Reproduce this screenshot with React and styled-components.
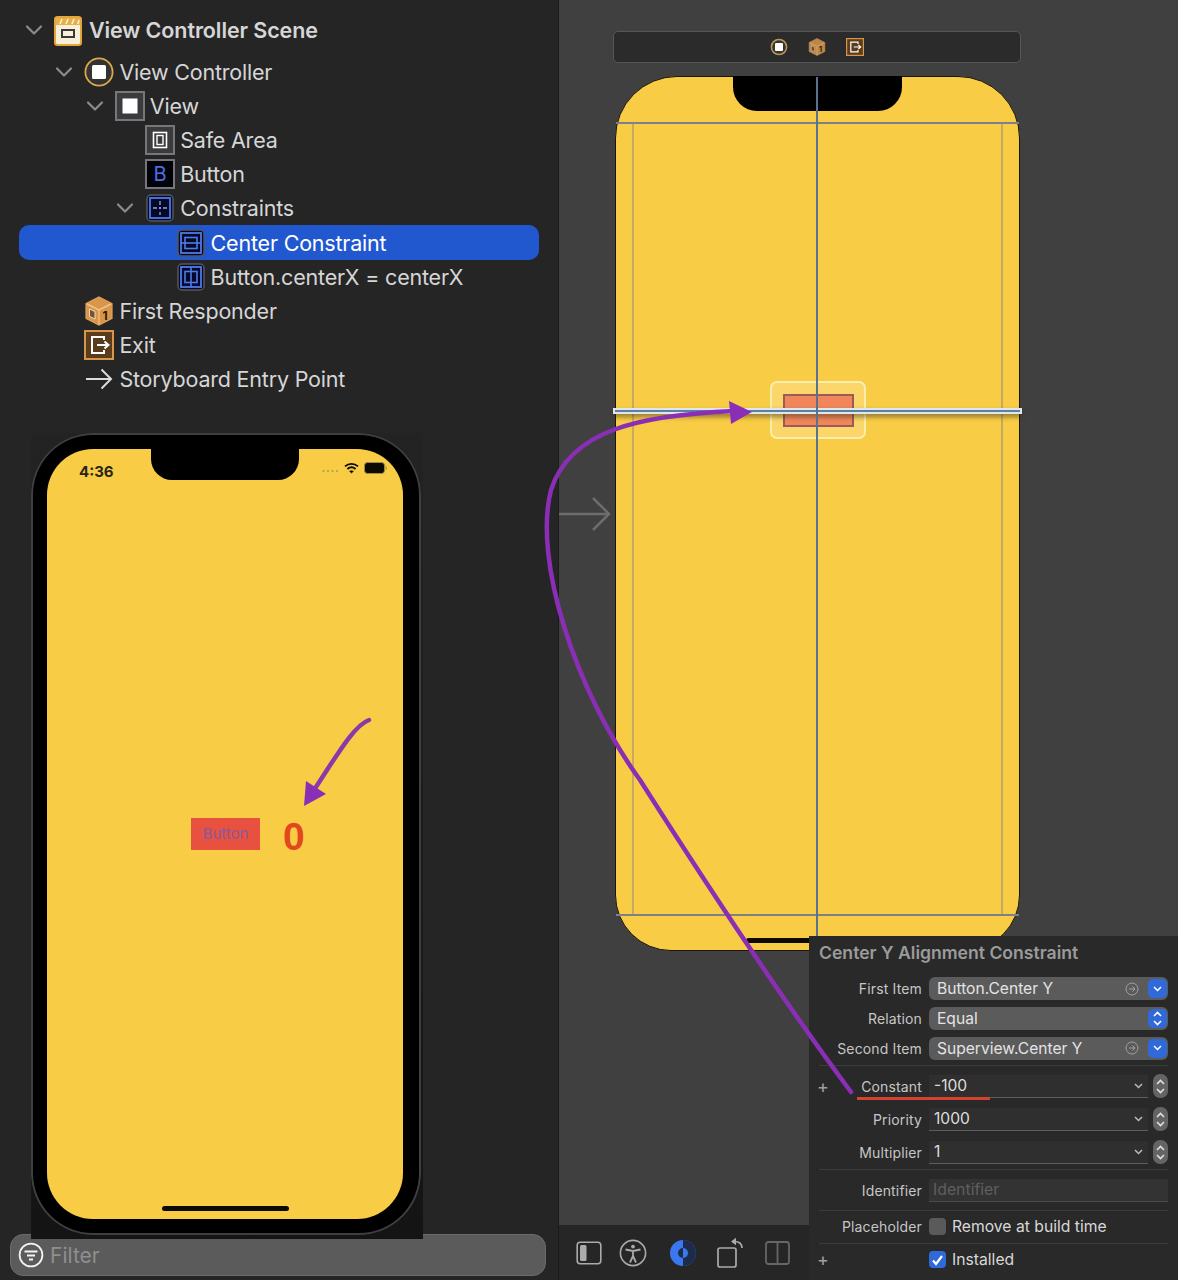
import React from "react";
import styled, { createGlobalStyle } from "styled-components";

const Global = createGlobalStyle`
  html, body { margin: 0; padding: 0; background: #252526; }
  body { width: 1178px; height: 1280px; overflow: hidden; font-family: Inter, "Liberation Sans", sans-serif; }
  * { box-sizing: border-box; }
`;

const Page = styled.div`
  position: relative;
  display: grid;
  grid-template-columns: 559px 619px;
  width: 1178px;
  height: 1280px;
  overflow: hidden;
`;

/* ---------- Sidebar ---------- */
const Sidebar = styled.aside`
  display: flex;
  flex-direction: column;
  background: #252526;
  padding-top: 13px;
  border-right: 1px solid #1c1c1c;
`;
const Tree = styled.div`
  display: flex;
  flex-direction: column;
  height: 384px;
`;
const Row = styled.div`
  display: flex;
  align-items: center;
  flex: none;
  width: 520px;
  height: ${p => (p.$scene ? 42 : 34.1)}px;
  margin-left: 19px;
  padding-left: ${p => p.$depth * 30.4}px;
  padding-bottom: ${p => (p.$scene ? 8 : 0)}px;
  border-radius: 10px;
  background: ${p => (p.$selected ? "#2157cf" : "transparent")};
`;
const ChevronSlot = styled.span`
  display: flex;
  align-items: center;
  justify-content: center;
  width: 30px;
  margin-right: 5px;
  flex: none;
`;
const IconSlot = styled.span`
  display: flex;
  align-items: center;
  justify-content: center;
  width: 30px;
  height: 30px;
  margin-right: 5px;
  flex: none;
`;
const RowLabel = styled.span`
  font-size: 21.5px;
  letter-spacing: ${p => (p.$scene ? -0.1 : -0.2)}px;
  white-space: nowrap;
  font-weight: ${p => (p.$scene ? 600 : 400)};
  color: ${p => (p.$selected ? "#fff" : "#d6d6d6")};
`;

const Simulator = styled.div`
  position: relative;
  z-index: 1;
  width: 392px;
  height: 806px;
  margin: 36px 0 0 31px;
  padding: 0 2px 4px 0;
  background: linear-gradient(#232324, #141414);
  flex: none;
`;
const PhoneBody = styled.div`
  width: 390px;
  height: 802px;
  padding: 16px 18px 16px 16px;
  background: #000;
  border-radius: 62px;
  box-shadow: inset 0 0 0 2px #3f3f41;
`;
const PhoneScreen = styled.div`
  display: flex;
  flex-direction: column;
  width: 356px;
  height: 770px;
  background: #f9cc46;
  border-radius: 46px;
  overflow: hidden;
`;
const StatusBar = styled.div`
  display: grid;
  grid-template-columns: 104px 148px 104px;
  height: 31px;
  flex: none;
`;
const Time = styled.span`
  font-size: 15px;
  font-weight: 700;
  color: #2a2515;
  padding: 14px 0 0 32px;
  line-height: 17px;
`;
const PhoneNotch = styled.div`
  background: #000;
  border-radius: 0 0 21px 21px;
`;
const StatusIcons = styled.div`
  display: flex;
  align-items: flex-start;
  gap: 5px;
  padding: 13px 0 0 23px;
`;
const AppRow = styled.div`
  display: flex;
  align-items: flex-start;
  margin: 338px 0 0 144px;
  gap: 23px;
`;
const AppButton = styled.div`
  width: 69px;
  height: 32px;
  background: #e8503f;
  color: #8b5a9c;
  font-size: 15px;
  line-height: 31px;
  text-align: center;
`;
const Counter = styled.div`
  font-family: "Liberation Sans", Arial, sans-serif;
  font-weight: 700;
  font-size: 39px;
  line-height: 38px;
  color: #e2471e;
`;
const PhoneHome = styled.div`
  width: 127px;
  height: 5px;
  border-radius: 3px;
  background: #0c0a05;
  margin: auto 0 8px 115px;
`;

const FilterBar = styled.div`
  display: flex;
  align-items: center;
  gap: 6px;
  width: 536px;
  height: 42px;
  margin: -5px 0 0 10px;
  padding: 0 0 0 7px;
  background: #5b5b5b;
  border: 1px solid #6b6b6b;
  border-radius: 13px;
  flex: none;
`;
const FilterText = styled.span`
  font-size: 21px;
  color: #8f8f8f;
`;

/* ---------- Canvas ---------- */
const Editor = styled.main`
  position: relative;
  display: flex;
  flex-direction: column;
`;
const Canvas = styled.div`
  flex: 1;
  background: #404040;
  padding: 31px 0 0 54px;
`;
const SceneDock = styled.div`
  display: flex;
  align-items: center;
  justify-content: center;
  gap: 20px;
  width: 408px;
  height: 32px;
  background: #2b2b2b;
  border: 1px solid #565656;
  border-radius: 5px;
`;
const Device = styled.div`
  position: relative;
  width: 405px;
  height: 875px;
  margin: 13px 0 0 2px;
  background: #f9cc46;
  border: 1.5px solid #1a1508;
  border-radius: 62px 62px 56px 56px;
`;
const DeviceNotch = styled.div`
  position: absolute;
  top: -1px;
  left: 117px;
  width: 169px;
  height: 35px;
  background: #000;
  border-radius: 0 0 24px 24px;
`;
const GuideH = styled.div`
  position: absolute;
  left: 0;
  right: 0;
  top: ${p => p.$top}px;
  height: 2px;
  background: #7e8087;
`;
const GuideV = styled.div`
  position: absolute;
  top: 45px;
  bottom: 36px;
  left: ${p => p.$left}px;
  width: 2px;
  background: rgba(130, 130, 130, 0.45);
`;
const CenterLine = styled.div`
  position: absolute;
  top: 0;
  bottom: 0;
  left: 200px;
  width: 2px;
  background: #5a7190;
  z-index: 3;
`;
const DeviceHome = styled.div`
  position: absolute;
  bottom: 7px;
  left: 130px;
  width: 143px;
  height: 5px;
  border-radius: 3px;
  background: #0c0a05;
`;
const SelectionBox = styled.div`
  position: absolute;
  left: 154px;
  top: 304px;
  width: 96px;
  height: 58px;
  display: flex;
  align-items: center;
  justify-content: center;
  background: rgba(255, 255, 255, 0.2);
  border: 2px solid #fdeead;
  border-radius: 7px;
`;
const SelectedButton = styled.div`
  width: 71px;
  height: 33px;
  background: #f0865a;
  border: 2px solid #9a5c5a;
`;
const ConstraintLine = styled.div`
  position: absolute;
  left: -3px;
  width: 409px;
  top: 331px;
  height: 6px;
  background: #5f7f9f;
  border: 2px solid #dfe7ee;
  box-shadow: 0 3px 5px rgba(60, 50, 20, 0.55);
  z-index: 2;
`;
const EntryArrow = styled.svg`
  position: absolute;
  left: -58px;
  top: 419px;
`;

const BottomBar = styled.div`
  display: flex;
  align-items: center;
  height: 55px;
  flex: none;
  background: #262627;
  padding-left: 8px;
`;
const ToolSlot = styled.span`
  display: flex;
  align-items: center;
  justify-content: center;
  width: ${p => p.$w}px;
  flex: none;
`;

/* ---------- Inspector ---------- */
const Inspector = styled.section`
  position: absolute;
  z-index: 4;
  left: 250px;
  top: 936px;
  width: 369px;
  height: 344px;
  padding: 0 10px;
  background: #292929;
`;
const InspectorTitle = styled.h2`
  margin: 0;
  height: 34px;
  line-height: 34px;
  font-size: 17.6px;
  font-weight: 600;
  color: #9b9b9b;
  white-space: nowrap;
`;
const Section = styled.div`
  padding-top: ${p => p.$pad || 0}px;
  padding-bottom: ${p => p.$bottom || 0}px;
  border-bottom: ${p => (p.$last ? "0" : "1px solid #3c3c3c")};
`;
const Prop = styled.div`
  display: grid;
  grid-template-columns: 103px 1fr;
  column-gap: 7px;
  align-items: center;
  height: ${p => p.$h}px;
`;
const PropLabel = styled.label`
  display: flex;
  justify-content: flex-end;
  font-size: 14px;
  letter-spacing: 0.15px;
  color: #c6c6c6;
  white-space: nowrap;
`;
const Plus = styled.span`
  margin: 0 auto 0 -2px;
  color: #a0a0a0;
  font-size: 18px;
  line-height: 17px;
`;
const Popup = styled.div`
  display: flex;
  align-items: center;
  justify-content: space-between;
  height: 23px;
  padding: 0 1px 0 8px;
  background: #5b5b5c;
  border-radius: 6px;
  font-size: 15.6px;
  color: #e3e3e3;
`;
const PopupEnd = styled.span`
  display: flex;
  align-items: center;
  gap: 9px;
`;
const BlueBox = styled.span`
  display: flex;
  align-items: center;
  justify-content: center;
  width: 19px;
  height: 19px;
  border-radius: 5px;
  background: #2f6ad8;
`;
const NumberRow = styled.div`
  display: flex;
  align-items: center;
  gap: 5px;
`;
const NumberField = styled.div`
  display: flex;
  align-items: center;
  justify-content: space-between;
  flex: 1;
  height: 23px;
  padding: 0 5px;
  background: #2f2f2f;
  border-bottom: 1px solid #5d5d5d;
  font-size: 15.6px;
  color: #dedede;
`;
const Stepper = styled.span`
  display: flex;
  align-items: center;
  justify-content: center;
  width: 15px;
  height: 24px;
  border-radius: 7px;
  background: #646464;
`;
const TextField = styled.div`
  height: 23px;
  padding: 0 4px;
  line-height: 22px;
  background: #333;
  border-bottom: 1px solid #4a4a4a;
  font-size: 15.8px;
  color: #5f5f5f;
`;
const CheckRow = styled.div`
  display: flex;
  align-items: center;
  gap: 6px;
  font-size: 15.7px;
  color: #d8d8d8;
`;
const Check = styled.span`
  display: flex;
  align-items: center;
  justify-content: center;
  width: 17px;
  height: 17px;
  border-radius: 4px;
  background: ${p => (p.$on ? "#2f6ad8" : "#5a5a5a")};
`;
const Underline = styled.div`
  position: absolute;
  z-index: 5;
  left: 857px;
  top: 1097px;
  width: 133px;
  height: 3px;
  background: #d4432f;
`;
const Annotations = styled.svg`
  position: absolute;
  z-index: 6;
  left: 0;
  top: 0;
  pointer-events: none;
`;

/* ---------- Icons ---------- */
const Chevron = () => (
  <svg width="18" height="12" viewBox="0 0 18 12" fill="none" stroke="#8b8b8b" strokeWidth="2.2" strokeLinecap="round" strokeLinejoin="round">
    <path d="M2 2.5 9 9.5 16 2.5" />
  </svg>
);
const SceneIcon = () => (
  <svg width="28" height="30" viewBox="0 0 28 30" style={{ marginLeft: -3, marginTop: 2 }}>
    <rect x="1" y="1" width="26" height="28" rx="2.5" fill="#f7efd8" stroke="#e3a53c" strokeWidth="2" />
    <rect x="2" y="2" width="24" height="7" fill="#e5b04a" />
    <path d="M6 8 8 3M12 8 14 3M18 8 20 3M24 8 25 4" stroke="#fff2c8" strokeWidth="1.6" />
    <rect x="8" y="14" width="12" height="7" fill="none" stroke="#3a3a3a" strokeWidth="2" />
  </svg>
);
const ControllerIcon = () => (
  <svg width="30" height="30" viewBox="0 0 30 30">
    <circle cx="15" cy="15" r="13.6" fill="#333" stroke="#dca94a" strokeWidth="1.8" />
    <rect x="8" y="8" width="14" height="14" rx="1.5" fill="#fff" />
  </svg>
);
const ViewIcon = () => (
  <svg width="30" height="30" viewBox="0 0 30 30">
    <rect x="1" y="1" width="28" height="28" fill="#3b3b3e" stroke="#77777b" strokeWidth="2" />
    <rect x="7.5" y="7.5" width="15" height="15" fill="#fff" />
  </svg>
);
const SafeAreaIcon = () => (
  <svg width="30" height="30" viewBox="0 0 30 30" fill="none">
    <rect x="1" y="1" width="28" height="28" fill="#3b3b3e" stroke="#77777b" strokeWidth="2" />
    <rect x="8.5" y="7.5" width="13" height="15" stroke="#fff" strokeWidth="1.6" />
    <rect x="12" y="10.5" width="6" height="9" stroke="#fff" strokeWidth="1.4" />
  </svg>
);
const ButtonIcon = () => (
  <svg width="30" height="30" viewBox="0 0 30 30">
    <rect x="1" y="1" width="28" height="28" fill="#02020a" stroke="#77777b" strokeWidth="2" />
    <text x="15" y="22" textAnchor="middle" fontFamily="Inter, sans-serif" fontSize="20" fill="#4f6fe0">B</text>
  </svg>
);
const ConstraintFrame = ({ children }) => (
  <svg width="28" height="28" viewBox="0 0 28 28" fill="none">
    <rect x="1" y="1" width="26" height="26" rx="4" fill="#06082a" stroke="#55565c" strokeWidth="1.5" />
    <rect x="4" y="4" width="20" height="20" stroke="#4d7be8" strokeWidth="1.8" />
    {children}
  </svg>
);
const ConstraintsIcon = () => (
  <ConstraintFrame>
    <path d="M14 7v4M14 13v2M14 18v3M7 14h4M13 14h2M17 14h4" stroke="#8aa7ee" strokeWidth="1.3" />
  </ConstraintFrame>
);
const CenterYIcon = () => (
  <ConstraintFrame>
    <rect x="8" y="8.5" width="12" height="11" stroke="#4d7be8" strokeWidth="1.6" />
    <path d="M4 14h20" stroke="#4d7be8" strokeWidth="1.6" />
  </ConstraintFrame>
);
const CenterXIcon = () => (
  <ConstraintFrame>
    <rect x="8" y="8.5" width="12" height="11" stroke="#4d7be8" strokeWidth="1.6" />
    <path d="M14 4v20" stroke="#4d7be8" strokeWidth="1.6" />
  </ConstraintFrame>
);
const CubeIcon = ({ size = 30, dim }) => (
  <svg width={size} height={size} viewBox="0 0 30 30" opacity={dim ? 0.85 : 1}>
    <path d="M15 1 28 7.5V22.5L15 29 2 22.5V7.5Z" fill="#d8964a" stroke="#e0a058" strokeWidth="1.2" />
    <path d="M3 8 15 14 27 8" fill="none" stroke="#f2c48a" strokeWidth="1.4" />
    <path d="M15 14V28.5" stroke="#f2c48a" strokeWidth="1.2" />
    <path d="M5.5 13 11 15.6V23L5.5 20.4Z" fill="#6f5436" stroke="#f3d9b4" strokeWidth="1" />
    <text x="21" y="24" textAnchor="middle" fontFamily="Inter, sans-serif" fontWeight="700" fontSize="12" fill="#2a1a08">1</text>
  </svg>
);
const ExitIcon = ({ size = 30 }) => (
  <svg width={size} height={size} viewBox="0 0 30 30" fill="none">
    <rect x="1" y="1" width="28" height="28" fill="#5a3d1c" stroke="#d8964a" strokeWidth="2" />
    <path d="M20 10V7H8V23H20V20" stroke="#fff" strokeWidth="2" />
    <path d="M13 15H24M20.5 11.5 24.5 15 20.5 18.5" stroke="#fff" strokeWidth="2" />
  </svg>
);
const EntryIcon = () => (
  <svg width="28" height="22" viewBox="0 0 28 22" fill="none" stroke="#dcdcdc" strokeWidth="2">
    <path d="M1 11H26M16.5 1.5 26 11 16.5 20.5" />
  </svg>
);
const FilterIcon = () => (
  <svg width="26" height="26" viewBox="0 0 26 26" fill="none" stroke="#f4f4f4">
    <circle cx="13" cy="13" r="11.4" strokeWidth="1.8" />
    <path d="M6.500 9.500h13" strokeWidth="2" />
    <path d="M9 13.500h8" strokeWidth="2" />
    <path d="M11 17.500h4" strokeWidth="2" />
  </svg>
);
const DockController = () => (
  <svg width="18" height="18" viewBox="0 0 18 18">
    <circle cx="9" cy="9" r="7.6" fill="#3c3528" stroke="#b59a62" strokeWidth="1.5" />
    <rect x="5" y="5" width="8" height="8" rx="1" fill="#fff" />
  </svg>
);
const Wifi = () => (
  <svg width="15" height="12" viewBox="0 0 15 12" fill="none" stroke="#0c0a05" strokeWidth="1.9">
    <path d="M1 4.400C4.800 1 10.200 1 14 4.400" />
    <path d="M3.400 6.900C5.800 4.900 9.200 4.900 11.600 6.900" />
    <path d="M5.600 9.300 7.500 11 9.400 9.300C8.200 8.400 6.800 8.400 5.600 9.300Z" fill="#0c0a05" strokeWidth="0.6" />
  </svg>
);
const Battery = () => (
  <svg width="23" height="12" viewBox="0 0 23 12">
    <rect x="0.500" y="0.500" width="20" height="11" rx="3" fill="#0c0a05" stroke="#a08a3c" />
    <path d="M21.500 4v4c.8-.3 1.300-1 1.300-2s-.5-1.700-1.300-2Z" fill="#a08a3c" />
  </svg>
);
const Dots = () => (
  <svg width="17" height="12" viewBox="0 0 17 12" fill="#a99a55">
    <circle cx="1.500" cy="9" r="1" /><circle cx="6" cy="9" r="1" /><circle cx="10.500" cy="9" r="1" /><circle cx="15" cy="9" r="1" />
  </svg>
);
const SmallChevron = ({ color = "#bbb" }) => (
  <svg width="9" height="6" viewBox="0 0 9 6" fill="none" stroke={color} strokeWidth="1.5"><path d="M1 1 4.500 4.500 8 1" /></svg>
);
const UpDown = ({ color = "#fff" }) => (
  <svg width="11" height="17" viewBox="0 0 11 17" fill="none" stroke={color} strokeWidth="1.6"><path d="M2 6 5.500 2.500 9 6M2 11 5.500 14.500 9 11" /></svg>
);
const GoCircle = () => (
  <svg width="14" height="14" viewBox="0 0 14 14" fill="none" stroke="#a2a2a2" strokeWidth="1"><circle cx="7" cy="7" r="6" /><path d="M4 7h6M7.500 4.500 10 7 7.500 9.500" /></svg>
);
const CheckMark = () => (
  <svg width="13" height="12" viewBox="0 0 13 12" fill="none" stroke="#fff" strokeWidth="2.2"><path d="M2 6.500 5 10 11 2" /></svg>
);
const PaneIcon = () => (
  <svg width="26" height="26" viewBox="0 0 26 26" fill="none">
    <rect x="1.200" y="2.200" width="23.600" height="21.600" rx="3" stroke="#ababab" strokeWidth="1.6" />
    <rect x="4" y="5" width="6.500" height="16" rx="1.500" fill="#ababab" />
  </svg>
);
const AccessIcon = () => (
  <svg width="28" height="28" viewBox="0 0 28 28" fill="none" stroke="#ababab">
    <circle cx="14" cy="14" r="12.600" strokeWidth="1.6" />
    <circle cx="14" cy="7.600" r="1.900" fill="#ababab" stroke="none" />
    <path d="M6.500 10.500 14 12l7.500-1.500M14 12v5M14 17l-3 6.500M14 17l3 6.500" strokeWidth="1.8" />
  </svg>
);
const ContrastIcon = () => (
  <svg width="28" height="28" viewBox="0 0 28 28">
    <circle cx="14" cy="14" r="13" fill="#3b78f0" />
    <path d="M14 1A13 13 0 0 1 14 27Z" fill="#1e2c4c" />
    <path d="M14 9A5 5 0 0 0 14 19Z" fill="#1e2c4c" />
    <path d="M14 9A5 5 0 0 1 14 19Z" fill="#3b78f0" />
  </svg>
);
const RotateIcon = () => (
  <svg width="28" height="32" viewBox="0 0 28 32" fill="none" stroke="#ababab">
    <rect x="1" y="11" width="18" height="19" rx="2" strokeWidth="1.7" />
    <path d="M25 11C25 6 21.500 4.500 17 4.500" strokeWidth="1.7" />
    <path d="M19 0.800 14 4.500 19 8.200Z" fill="#ababab" stroke="none" />
  </svg>
);
const SplitIcon = () => (
  <svg width="25" height="24" viewBox="0 0 25 24" fill="none" stroke="#666" strokeWidth="1.8">
    <rect x="1" y="1" width="23" height="22" rx="2.500" />
    <path d="M12.500 1V23" />
  </svg>
);

const rows = [
  { depth: 0, chevron: true, icon: <SceneIcon />, label: "View Controller Scene", scene: true },
  { depth: 1, chevron: true, icon: <ControllerIcon />, label: "View Controller" },
  { depth: 2, chevron: true, icon: <ViewIcon />, label: "View" },
  { depth: 3, icon: <SafeAreaIcon />, label: "Safe Area" },
  { depth: 3, icon: <ButtonIcon />, label: "Button" },
  { depth: 3, chevron: true, icon: <ConstraintsIcon />, label: "Constraints" },
  { depth: 4, icon: <CenterYIcon />, label: "Center Constraint", selected: true },
  { depth: 4, icon: <CenterXIcon />, label: "Button.centerX = centerX" },
  { depth: 1, icon: <CubeIcon />, label: "First Responder" },
  { depth: 1, icon: <ExitIcon />, label: "Exit" },
  { depth: 1, icon: <EntryIcon />, label: "Storyboard Entry Point" },
];

export default function App() {
  return (
    <Page>
      <Global />
      <Sidebar>
        <Tree>
          {rows.map(r => (
            <Row key={r.label} $depth={r.depth} $selected={r.selected} $scene={r.scene}>
              <ChevronSlot>{r.chevron && <Chevron />}</ChevronSlot>
              <IconSlot>{r.icon}</IconSlot>
              <RowLabel $selected={r.selected} $scene={r.scene}>{r.label}</RowLabel>
            </Row>
          ))}
        </Tree>
        <Simulator>
          <PhoneBody>
            <PhoneScreen>
              <StatusBar>
                <Time>4:36</Time>
                <PhoneNotch />
                <StatusIcons><Dots /><Wifi /><Battery /></StatusIcons>
              </StatusBar>
              <AppRow>
                <AppButton>Button</AppButton>
                <Counter>0</Counter>
              </AppRow>
              <PhoneHome />
            </PhoneScreen>
          </PhoneBody>
        </Simulator>
        <FilterBar>
          <FilterIcon />
          <FilterText>Filter</FilterText>
        </FilterBar>
      </Sidebar>

      <Editor>
        <Canvas>
          <SceneDock>
            <DockController />
            <CubeIcon size={18} dim />
            <ExitIcon size={18} />
          </SceneDock>
          <Device>
            <EntryArrow width="54" height="36" viewBox="0 0 54 36" fill="none" stroke="#6d6d6d" strokeWidth="2.5">
              <path d="M1 18H51M35 2 51 18 35 34" />
            </EntryArrow>
            <DeviceNotch />
            <GuideH $top={45} />
            <GuideH $top={837} />
            <GuideV $left={16} />
            <GuideV $left={385} />
            <DeviceHome />
            <SelectionBox><SelectedButton /></SelectionBox>
            <ConstraintLine />
            <CenterLine />
          </Device>
        </Canvas>
        <BottomBar>
          <ToolSlot $w={44}><PaneIcon /></ToolSlot>
          <ToolSlot $w={44}><AccessIcon /></ToolSlot>
          <ToolSlot $w={56}><ContrastIcon /></ToolSlot>
          <ToolSlot $w={40}><RotateIcon /></ToolSlot>
          <ToolSlot $w={52}><SplitIcon /></ToolSlot>
        </BottomBar>
        <Inspector>
          <InspectorTitle>Center Y Alignment Constraint</InspectorTitle>
          <Section $pad={4} $bottom={1.600}>
            <Prop $h={29.800}>
              <PropLabel>First Item</PropLabel>
              <Popup>Button.Center Y<PopupEnd><GoCircle /><BlueBox><SmallChevron color="#fff" /></BlueBox></PopupEnd></Popup>
            </Prop>
            <Prop $h={29.800}>
              <PropLabel>Relation</PropLabel>
              <Popup>Equal<PopupEnd><BlueBox><UpDown /></BlueBox></PopupEnd></Popup>
            </Prop>
            <Prop $h={29.800}>
              <PropLabel>Second Item</PropLabel>
              <Popup>Superview.Center Y<PopupEnd><GoCircle /><BlueBox><SmallChevron color="#fff" /></BlueBox></PopupEnd></Popup>
            </Prop>
          </Section>
          <Section $pad={4}>
            <Prop $h={33}>
              <PropLabel><Plus>+</Plus>Constant</PropLabel>
              <NumberRow><NumberField>-100<SmallChevron /></NumberField><Stepper><UpDown color="#e0e0e0" /></Stepper></NumberRow>
            </Prop>
            <Prop $h={33}>
              <PropLabel>Priority</PropLabel>
              <NumberRow><NumberField>1000<SmallChevron /></NumberField><Stepper><UpDown color="#e0e0e0" /></Stepper></NumberRow>
            </Prop>
            <Prop $h={33}>
              <PropLabel>Multiplier</PropLabel>
              <NumberRow><NumberField>1<SmallChevron /></NumberField><Stepper><UpDown color="#e0e0e0" /></Stepper></NumberRow>
            </Prop>
          </Section>
          <Section $pad={2}>
            <Prop $h={38}>
              <PropLabel>Identifier</PropLabel>
              <TextField>Identifier</TextField>
            </Prop>
          </Section>
          <Section>
            <Prop $h={32}>
              <PropLabel>Placeholder</PropLabel>
              <CheckRow><Check />Remove at build time</CheckRow>
            </Prop>
          </Section>
          <Section $last>
            <Prop $h={32}>
              <PropLabel><Plus>+</Plus></PropLabel>
              <CheckRow><Check $on><CheckMark /></Check>Installed</CheckRow>
            </Prop>
          </Section>
        </Inspector>
      </Editor>

      <Underline />
      <Annotations width="1178" height="1280" viewBox="0 0 1178 1280" fill="none">
        <path d="M735 411C640 415 570 430 551 490C533 560 575 690 640 780C710 890 790 1010 851 1092" stroke="#8a2fb5" strokeWidth="4.500" strokeLinecap="round" />
        <path d="M752 412 729 401 731 424Z" fill="#8a2fb5" />
        <path d="M369 720C355 725 340 750 316 787" stroke="#8a3aa8" strokeWidth="4.500" strokeLinecap="round" />
        <path d="M304 806 306 781 326 794Z" fill="#8a2fb5" />
      </Annotations>
    </Page>
  );
}
